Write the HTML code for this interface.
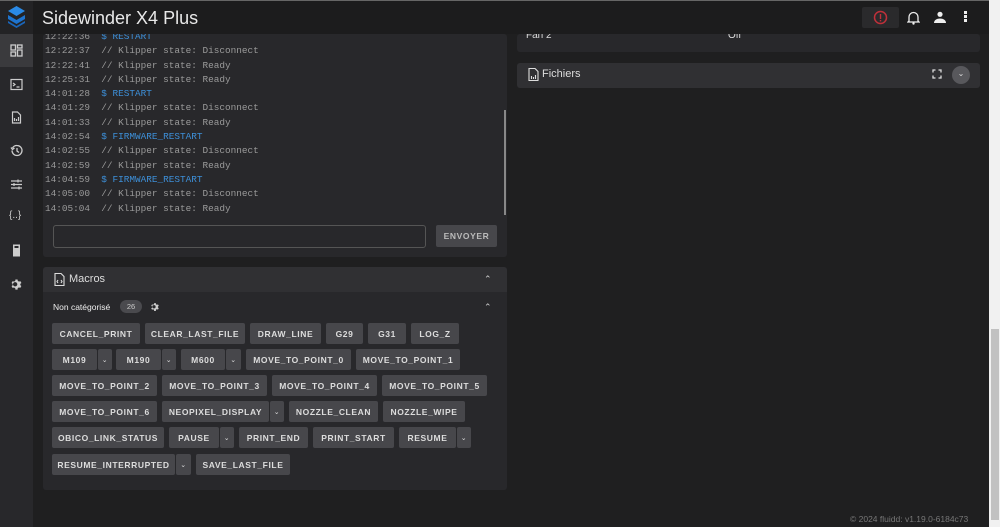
<!DOCTYPE html>
<html><head><meta charset="utf-8"><style>
*{box-sizing:border-box;margin:0;padding:0}
body{width:1000px;height:527px;overflow:hidden;background:#1f1f20;font-family:"Liberation Sans",sans-serif;color:#ddd;position:relative}
.abs{position:absolute}
.bar{left:0;top:0;width:989px;height:34px;background:#1c1c1d;border-top:1px solid #666;z-index:5}
.side{left:0;top:34px;width:33px;height:493px;background:#28282b}
.card{background:#28282b;border-radius:3px}
.mono{font-family:"Liberation Mono",monospace;font-size:9.4px;color:#9a9a9a;white-space:pre}
.cmd{color:#3d8fd8}
.b{position:absolute;height:21px;background:#47474b;border-radius:2px;color:#ddd;font-size:8.5px;font-weight:bold;letter-spacing:.6px;display:flex;align-items:center;justify-content:center}
.dd{font-size:7px;font-weight:normal}
.ic{position:absolute;left:10px;width:13px;height:13px}
</style></head><body>
<div class="abs bar"></div>
<div class="abs" style="left:0;top:1px;width:33px;height:33px;background:#232325;z-index:6"></div>
<svg class="abs" style="left:8px;top:6px;z-index:7" width="17" height="22" viewBox="0 0 17 22"><path d="M8.5 0L17 5 8.5 10 0 5Z" fill="#2a8ae6"/><path d="M0 9l8.5 5 8.5-5v4l-8.5 5L0 13Z" fill="#1e74cf"/><path d="M0 15l8.5 5 8.5-5v2l-8.5 5L0 17Z" fill="#1a66bb"/></svg>
<div class="abs" style="left:42px;top:8px;font-size:18px;color:#e8e8e8;z-index:7">Sidewinder X4 Plus</div>
<div class="abs" style="left:862px;top:7px;width:37px;height:21px;background:#2a2a2c;border-radius:2px;z-index:7"></div>
<svg class="abs" style="left:873px;top:10px;z-index:8" width="15" height="15" viewBox="0 0 15 15"><circle cx="7.5" cy="7.5" r="6" fill="none" stroke="#c0303a" stroke-width="1.5"/><rect x="6.8" y="4" width="1.4" height="5" fill="#c0303a"/><rect x="6.8" y="10" width="1.4" height="1.4" fill="#c0303a"/></svg>
<svg class="abs" style="left:907px;top:10px;z-index:8" width="13" height="15" viewBox="0 0 13 15"><path d="M2 11V7a4.5 4.5 0 019 0v4l1 1H1z" fill="none" stroke="#eee" stroke-width="1.3"/><circle cx="6.5" cy="13.5" r="1.2" fill="#eee"/></svg>
<svg class="abs" style="left:934px;top:11px;z-index:8" width="12" height="12" viewBox="0 0 12 12"><circle cx="6" cy="3.3" r="2.6" fill="#eee"/><path d="M0 12c0-3 3-4.5 6-4.5s6 1.5 6 4.5z" fill="#eee"/></svg>
<div class="abs" style="left:964px;top:11px;width:3px;height:3px;background:#eee;box-shadow:0 4px #eee,0 8px #eee;z-index:8"></div>

<div class="abs side"></div>
<div class="abs" style="left:0;top:34px;width:33px;height:33px;background:#3a3a3d"></div>
<svg class="ic" style="top:44px" viewBox="0 0 13 13" fill="none" stroke="#ccc" stroke-width="1.3"><rect x="1" y="1" width="4.5" height="5"/><rect x="7.5" y="1" width="4.5" height="3"/><rect x="1" y="8" width="4.5" height="4"/><rect x="7.5" y="6" width="4.5" height="6"/></svg>
<svg class="ic" style="top:78px" viewBox="0 0 13 13" fill="none" stroke="#ccc" stroke-width="1.2"><rect x="1" y="1.5" width="11" height="10"/><path d="M3 5l2 1.5L3 8M6.5 9h3"/></svg>
<svg class="ic" style="top:111px" viewBox="0 0 13 13" fill="none" stroke="#ccc" stroke-width="1.2"><path d="M2.5 1h5l3 3v8h-8z"/><path d="M4.5 7v3M6.5 8v2M8.5 6v4"/></svg>
<svg class="ic" style="top:144px" viewBox="0 0 13 13" fill="none" stroke="#ccc" stroke-width="1.3"><path d="M2 6.5a5 5 0 105-5A5 5 0 002.5 4M1 3.5l1.5 2 2-1.5M7 4v3l2 1.5"/></svg>
<svg class="ic" style="top:178px" viewBox="0 0 13 13" fill="none" stroke="#ccc" stroke-width="1.2"><path d="M1 3h11M1 6.5h11M1 10h11M8 1.5v3M4 5v3M9 8.5v3"/></svg>
<div class="abs" style="left:9px;top:210px;font-size:10px;color:#ccc;font-family:'Liberation Sans',sans-serif">{..}</div>
<svg class="ic" style="top:244px" viewBox="0 0 13 13"><rect x="3" y="0.5" width="7" height="12" fill="#ccc"/><rect x="4.5" y="2" width="4" height="2" fill="#28282b"/></svg>
<svg class="ic" style="top:278px" viewBox="0 0 24 24"><path fill="#ccc" d="M12 8a4 4 0 100 8 4 4 0 000-8zm9.4 5.6l2.1 1.6-2 3.5-2.5-1a8 8 0 01-2.2 1.3L16.5 22h-4l-.4-2.7a8 8 0 01-2.2-1.3l-2.5 1-2-3.5 2.1-1.6a8 8 0 010-2.6L5.4 9.7l2-3.5 2.5 1A8 8 0 0112.1 6l.4-2.7h4l.4 2.7a8 8 0 012.2 1.3l2.5-1 2 3.5-2.1 1.6a8 8 0 010 2.2z" transform="translate(-2.5 -0.5)"/></svg>

<!-- console card -->
<div class="abs card" style="left:43px;top:34px;width:464px;height:223px"></div>
<div class="abs" style="left:504px;top:110px;width:2px;height:105px;background:#888"></div>
<div class="abs mono" style="left:45px;top:30px;line-height:14.3px">12:22:36  <span class="cmd">$ RESTART</span>
12:22:37  // Klipper state: Disconnect
12:22:41  // Klipper state: Ready
12:25:31  // Klipper state: Ready
14:01:28  <span class="cmd">$ RESTART</span>
14:01:29  // Klipper state: Disconnect
14:01:33  // Klipper state: Ready
14:02:54  <span class="cmd">$ FIRMWARE_RESTART</span>
14:02:55  // Klipper state: Disconnect
14:02:59  // Klipper state: Ready
14:04:59  <span class="cmd">$ FIRMWARE_RESTART</span>
14:05:00  // Klipper state: Disconnect
14:05:04  // Klipper state: Ready</div>
<div class="abs" style="left:53px;top:225px;width:373px;height:23px;border:1px solid #555;border-radius:3px"></div>
<div class="b" style="left:436px;top:225px;width:61px;height:22px;color:#bbb">ENVOYER</div>

<!-- macros -->
<div class="abs card" style="left:43px;top:267px;width:464px;height:223px"></div>
<div class="abs" style="left:43px;top:267px;width:464px;height:25px;background:#303033;border-radius:3px 3px 0 0"></div>
<svg class="abs" style="left:54px;top:273px" width="11" height="13" viewBox="0 0 11 13" fill="none" stroke="#ddd" stroke-width="1.1"><path d="M1 .5h6l3 3v9H1z"/><path d="M4 7l-1 1.5L4 10M7 7l1 1.5L7 10"/></svg>
<div class="abs" style="left:69px;top:273px;font-size:11px;color:#ddd">Macros</div>
<div class="abs" style="left:484px;top:274px;font-size:9px;color:#ccc">⌃</div>
<div class="abs" style="left:53px;top:302px;font-size:8.5px;color:#eee">Non catégorisé</div>
<div class="abs" style="left:120px;top:300px;width:22px;height:13px;border-radius:7px;background:#4a4a4e;font-size:7.5px;color:#ccc;text-align:center;line-height:13px">26</div>
<svg class="abs" style="left:150px;top:302px" width="10" height="10" viewBox="0 0 24 24"><path fill="#ccc" d="M12 8a4 4 0 100 8 4 4 0 000-8zm9.4 5.6l2.1 1.6-2 3.5-2.5-1a8 8 0 01-2.2 1.3L16.5 22h-4l-.4-2.7a8 8 0 01-2.2-1.3l-2.5 1-2-3.5 2.1-1.6a8 8 0 010-2.6L5.4 9.7l2-3.5 2.5 1A8 8 0 0112.1 6l.4-2.7h4l.4 2.7a8 8 0 012.2 1.3l2.5-1 2 3.5-2.1 1.6a8 8 0 010 2.2z" transform="translate(-2.5 -0.5)"/></svg>
<div class="abs" style="left:484px;top:302px;font-size:9px;color:#ccc">⌃</div>

<div class="b" style="left:52px;top:323px;width:88px">CANCEL_PRINT</div>
<div class="b" style="left:145px;top:323px;width:100px">CLEAR_LAST_FILE</div>
<div class="b" style="left:250px;top:323px;width:71px">DRAW_LINE</div>
<div class="b" style="left:326px;top:323px;width:37px">G29</div>
<div class="b" style="left:368px;top:323px;width:38px">G31</div>
<div class="b" style="left:411px;top:323px;width:48px">LOG_Z</div>

<div class="b" style="left:52px;top:349px;width:45px">M109</div><div class="b dd" style="left:98px;top:349px;width:14px">⌄</div>
<div class="b" style="left:116px;top:349px;width:45px">M190</div><div class="b dd" style="left:162px;top:349px;width:14px">⌄</div>
<div class="b" style="left:181px;top:349px;width:44px">M600</div><div class="b dd" style="left:226px;top:349px;width:15px">⌄</div>
<div class="b" style="left:246px;top:349px;width:105px">MOVE_TO_POINT_0</div>
<div class="b" style="left:356px;top:349px;width:104px">MOVE_TO_POINT_1</div>

<div class="b" style="left:52px;top:375px;width:105px">MOVE_TO_POINT_2</div>
<div class="b" style="left:162px;top:375px;width:105px">MOVE_TO_POINT_3</div>
<div class="b" style="left:272px;top:375px;width:105px">MOVE_TO_POINT_4</div>
<div class="b" style="left:382px;top:375px;width:105px">MOVE_TO_POINT_5</div>

<div class="b" style="left:52px;top:401px;width:105px">MOVE_TO_POINT_6</div>
<div class="b" style="left:162px;top:401px;width:107px">NEOPIXEL_DISPLAY</div><div class="b dd" style="left:270px;top:401px;width:14px">⌄</div>
<div class="b" style="left:289px;top:401px;width:89px">NOZZLE_CLEAN</div>
<div class="b" style="left:383px;top:401px;width:82px">NOZZLE_WIPE</div>

<div class="b" style="left:52px;top:427px;width:112px">OBICO_LINK_STATUS</div>
<div class="b" style="left:169px;top:427px;width:50px">PAUSE</div><div class="b dd" style="left:220px;top:427px;width:14px">⌄</div>
<div class="b" style="left:239px;top:427px;width:69px">PRINT_END</div>
<div class="b" style="left:313px;top:427px;width:81px">PRINT_START</div>
<div class="b" style="left:399px;top:427px;width:57px">RESUME</div><div class="b dd" style="left:457px;top:427px;width:14px">⌄</div>

<div class="b" style="left:52px;top:454px;width:123px">RESUME_INTERRUPTED</div><div class="b dd" style="left:176px;top:454px;width:15px">⌄</div>
<div class="b" style="left:196px;top:454px;width:94px">SAVE_LAST_FILE</div>

<!-- right -->
<div class="abs card" style="left:517px;top:34px;width:463px;height:18px"></div>
<div class="abs" style="left:526px;top:30px;font-size:10px;color:#ddd">Fan 2</div>
<div class="abs" style="left:728px;top:30px;font-size:10px;color:#ddd">Off</div>
<div class="abs" style="left:517px;top:63px;width:463px;height:25px;background:#303033;border-radius:3px"></div>
<svg class="abs" style="left:528px;top:68px" width="11" height="13" viewBox="0 0 11 13" fill="none" stroke="#ddd" stroke-width="1.1"><path d="M1 .5h6l3 3v9H1z"/><path d="M3.5 8v3M5.5 9v2M7.5 7v4"/></svg>
<div class="abs" style="left:542px;top:68px;font-size:11px;color:#ddd">Fichiers</div>
<svg class="abs" style="left:932px;top:69px" width="10" height="10" viewBox="0 0 10 10" fill="none" stroke="#ddd" stroke-width="1.3"><path d="M1 3.5V1h2.5M6.5 1H9v2.5M9 6.5V9H6.5M3.5 9H1V6.5"/></svg>
<div class="abs" style="left:952px;top:66px;width:18px;height:18px;border-radius:50%;background:#58585c;color:#ddd;font-size:8px;text-align:center;line-height:16px">⌄</div>

<div class="abs" style="left:850px;top:514px;font-size:8.5px;color:#777">© 2024 fluidd: v1.19.0-6184c73</div>
<div class="abs" style="left:989px;top:0;width:11px;height:527px;background:#f1f1f1;z-index:9"></div>
<div class="abs" style="left:991px;top:329px;width:8px;height:191px;background:#c1c1c1;z-index:10"></div>
</body></html>
